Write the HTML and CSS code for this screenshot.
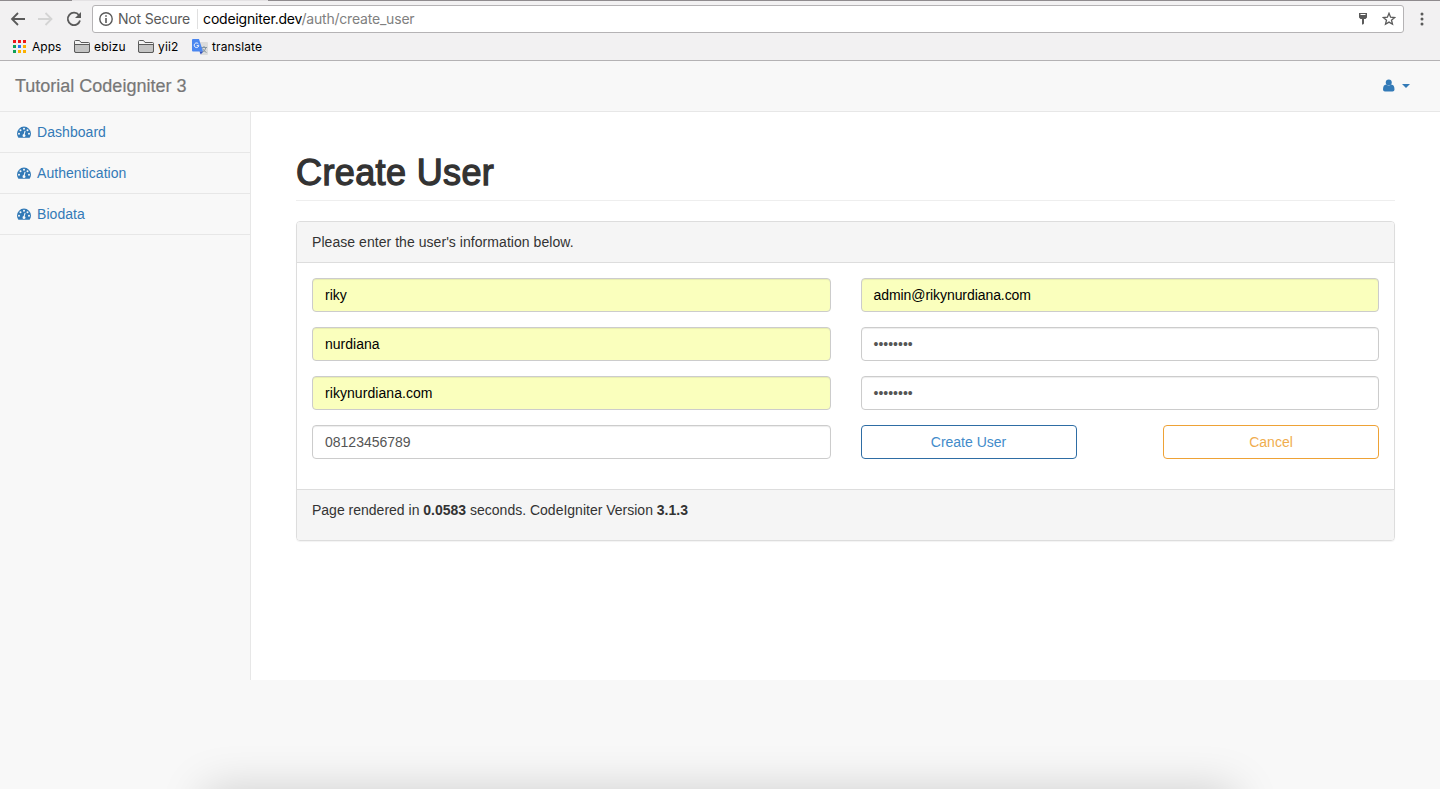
FILE: index.html
```html
<!DOCTYPE html>
<html lang="en">
<head>
<meta charset="utf-8">
<title>Create User</title>
<link rel="stylesheet" href="styles.css">
</head>
<body>
<svg width="0" height="0" class="defs">
  <symbol id="gauge" viewBox="0 0 14 12"><path fill="currentColor" fill-rule="evenodd" d="M7 .6a7 7 0 0 0-7 7c0 1.3.4 2.6 1.1 3.7.1.2.3.4.4.4h11c.2 0 .3-.2.4-.4.7-1.100 1.100-2.400 1.100-3.700a7 7 0 0 0-7-7zM2 8.700a1 1 0 1 1 0-2 1 1 0 0 1 0 2zM3.500 5.200a1 1 0 1 1 0-2 1 1 0 0 1 0 2zM7 1.700a1 1 0 1 1 0 2 1 1 0 0 1 0-2zM8.500 9.900A1.500 1.500 0 1 1 6.700 8.100L7.500 5.100a.5.5 0 0 1 1 .3L7.700 8.300c.6.400.9 1 .8 1.600zM10.500 5.200a1 1 0 1 1 0-2 1 1 0 0 1 0 2zM12 8.700a1 1 0 1 1 0-2 1 1 0 0 1 0 2z"/></symbol>
  <symbol id="folder" viewBox="0 0 16 13"><path fill="#f4f4f4" stroke="#5a5a5a" d="M.5 11V1.500q0-1 1-1h4l1.500 2h7.500q1 0 1 1V11q0 1.500-1.500 1.500H2Q.5 12.500.5 11z"/><path fill="#c4c4c4" stroke="#5a5a5a" d="M.5 4.500h15V11q0 1.500-1.500 1.500H2Q.5 12.500.5 11z"/></symbol>
</svg>
<header class="browser">
  <div class="tabline"><i></i><b></b><i></i></div>
  <div class="toolbar">
    <svg class="back" width="16" height="14" viewBox="0 0 16 14" fill="none" stroke="#5a5a5a" stroke-width="1.800"><path d="M15 7H2.500M8 1 2 7l6 6"/></svg>
    <svg class="forward" width="16" height="14" viewBox="0 0 16 14" fill="none" stroke="#d4d4d4" stroke-width="1.800"><path d="M0 7h13M7.500 1l6 6-6 6"/></svg>
    <svg class="reload" width="16" height="16" viewBox="0 0 16 16"><path d="M13 4.200A6.200 6.200 0 1 0 14 9.500" fill="none" stroke="#5a5a5a" stroke-width="1.800"/><path d="M15 1v6H9z" fill="#5a5a5a"/></svg>
    <div class="omnibox">
      <svg class="info" width="14" height="14" viewBox="0 0 14 14"><circle cx="7" cy="7" r="6.200" fill="none" stroke="#5a5a5a" stroke-width="1.400"/><path d="M6.200 6h1.600v5H6.200zM6.200 3.200h1.600v1.600H6.200z" fill="#5a5a5a"/></svg>
      <span class="secure">Not Secure</span>
      <span class="divider"></span>
      <span class="url">codeigniter.dev<em>/auth/create_user</em></span>
      <svg class="key" width="8" height="12" viewBox="0 0 8 12"><path fill="#5a5a5a" fill-rule="evenodd" d="M0 0h8v4.500L6.500 6H5v4.500L4 11.500H3V6H1.500L0 4.500zM1.500 1v1h5V1z"/></svg>
      <svg class="star" width="14" height="14" viewBox="0 0 14 14"><path d="M7 1.300 8.600 5.200l4.100.3-3.200 2.700 1 4L7 10.100l-3.500 2.100 1-4L1.300 5.500l4.100-.3z" fill="none" stroke="#5a5a5a" stroke-width="1.300"/></svg>
    </div>
    <svg class="dots" width="4" height="14" viewBox="0 0 4 14" fill="#5a5a5a"><circle cx="2" cy="2" r="1.500"/><circle cx="2" cy="7" r="1.500"/><circle cx="2" cy="12" r="1.500"/></svg>
  </div>
  <nav class="bookmarks">
    <svg class="apps" width="13" height="13" viewBox="0 0 13 13"><path fill="#f01818" d="M0 0h3v3H0zM5 0h3v3H5zM10 0h3v3h-3z"/><path fill="#0fa058" d="M0 5h3v3H0zM0 10h3v3H0z"/><path fill="#2878f0" d="M5 5h3v3H5z"/><path fill="#fbb000" d="M10 5h3v3h-3zM5 10h3v3H5zM10 10h3v3h-3z"/></svg>
    <span class="bm-apps">Apps</span>
    <svg class="folder" width="16" height="13"><use href="#folder"/></svg>
    <span class="bm-ebizu">ebizu</span>
    <svg class="folder" width="16" height="13"><use href="#folder"/></svg>
    <span class="bm-yii">yii2</span>
    <svg class="gtrans" width="16" height="16" viewBox="0 0 16 16"><path fill="#dcdcdc" d="M6 3h9q1 0 1 1v11q0 1-1 1H9z"/><path d="M9 8.500h6M12 7v1.500M14 8.500q-.8 3.500-4 5M10.500 9.500q1 2.500 4 4" stroke="#8595a0" fill="none"/><path fill="#4a86f0" d="M1 0h6l4 12.500H1q-1 0-1-1V1q0-1 1-1z"/><path fill="#3050c0" d="M7.500 12.500H11L8.800 15.500z"/><path d="M6.400 4.900A2.300 2.300 0 1 0 6.800 6.700H4.700" stroke="#fff" stroke-width="1" fill="none"/></svg>
    <span class="bm-trans">translate</span>
  </nav>
</header>
<div class="navbar">
  <a class="brand">Tutorial Codeigniter 3</a>
  <a class="user">
    <svg width="12" height="13" viewBox="0 0 12 13" fill="#337ab7"><path d="M3.200 5.500Q0 5.700 0 10.500 0 12.500 2 12.500h7.500q2 0 2-2 0-4.800-3.200-5Q5.750 7.800 3.200 5.500z"/><circle cx="5.750" cy="3.400" r="3"/></svg>
    <i class="caret"></i>
  </a>
</div>
<div class="wrapper">
  <aside class="sidebar">
    <a><svg width="14" height="12"><use href="#gauge"/></svg><span>Dashboard</span></a>
    <a><svg width="14" height="12"><use href="#gauge"/></svg><span>Authentication</span></a>
    <a><svg width="14" height="12"><use href="#gauge"/></svg><span>Biodata</span></a>
  </aside>
  <main class="page">
    <h1>Create User</h1>
    <section class="panel">
      <div class="panel-heading">Please enter the user's information below.</div>
      <div class="panel-body">
        <div class="column">
          <div class="field auto">riky</div>
          <div class="field auto">nurdiana</div>
          <div class="field auto site">rikynurdiana.com</div>
          <div class="field">08123456789</div>
        </div>
        <div class="column">
          <div class="field auto email">admin@rikynurdiana.com</div>
          <div class="field">••••••••</div>
          <div class="field">••••••••</div>
          <div class="actions">
            <a class="btn primary">Create User</a>
            <a class="btn warning">Cancel</a>
          </div>
        </div>
      </div>
      <div class="panel-footer">Page rendered in <strong>0.0583</strong> seconds. CodeIgniter Version <strong>3.1.3</strong></div>
    </section>
  </main>
</div>
<div class="shade"><div class="dock-shadow"></div></div>
</body>
</html>
```
FILE: styles.css
```css
* { box-sizing: border-box; }
html { overflow: hidden; }
body {
  position: relative;
  margin: 0;
  height: 789px;
  overflow: hidden;
  background: #f8f8f8;
  color: #333;
  font: 14px/20px "Liberation Sans", Arial, sans-serif;
}
svg { display: block; flex: none; }
.defs { position: absolute; }

/* Browser chrome */
.browser {
  height: 61px;
  background: #f2f1f2;
  border-bottom: 1px solid #b4b2b4;
  font-family: Inter, sans-serif;
  white-space: nowrap;
}
.tabline { display: flex; height: 1px; }
.tabline i { width: 72px; background: #8f8b8e; }
.tabline b { width: 196px; background: #e4e2e4; }
.tabline i:last-child { flex: 1; }
.toolbar { display: flex; align-items: center; height: 36px; padding: 0 16px 0 10px; }
.forward { margin-left: 12px; }
.reload { margin-left: 12px; }
.omnibox {
  display: flex;
  align-items: center;
  width: 1312px;
  height: 28px;
  margin-left: 10px;
  padding: 0 7px 0 6px;
  background: #fff;
  border: 1px solid #b5b3b5;
  border-radius: 3px;
}
.secure { margin-left: 5px; color: #5a5a5a; letter-spacing: -0.2px; }
.divider { width: 1px; height: 20px; margin: 0 5px 0 7px; background: #e0e0e0; }
.url { color: #000; letter-spacing: -0.2px; }
.url em { color: #808080; font-style: normal; }
.key { margin-left: auto; }
.star { margin-left: 15px; }
.dots { margin-left: 16px; }
.bookmarks {
  display: flex;
  align-items: center;
  height: 19px;
  padding-left: 13px;
  font-size: 12px;
  letter-spacing: 0.15px;
  color: #000;
}
.bookmarks span { margin-left: 4px; }
.bookmarks .bm-apps { width: 42px; margin-left: 6px; letter-spacing: 0; }
.bm-ebizu { width: 44px; }
.bm-yii { width: 34px; }
.bm-trans { letter-spacing: 0.12px; }

/* Application header */
.navbar {
  display: flex;
  align-items: center;
  justify-content: space-between;
  height: 51px;
  padding: 0 30px 0 15px;
  border-bottom: 1px solid #e7e7e7;
}
.brand { font-size: 18px; color: #777; -webkit-text-stroke: 0.2px #777; }
.user { display: flex; align-items: center; }
.user svg { margin-bottom: 1px; }
.caret {
  margin-left: 7px;
  border-top: 4px solid #337ab7;
  border-left: 4px solid transparent;
  border-right: 4px solid transparent;
}

.wrapper { display: flex; height: 568px; }
.sidebar { width: 250px; }
.sidebar a {
  display: flex;
  align-items: center;
  gap: 6px;
  height: 41px;
  padding-left: 17px;
  border-bottom: 1px solid #e7e7e7;
  color: #337ab7;
  letter-spacing: 0.05px;
}
.page { flex: 1; padding: 41px 45px 0; background: #fff; border-left: 1px solid #e7e7e7; }
h1 {
  height: 48px;
  margin: 0 0 20px;
  border-bottom: 1px solid #eee;
  font-size: 36px;
  line-height: 40px;
  font-weight: 400;
  letter-spacing: 0.38px;
  -webkit-text-stroke: 1.3px #333;
}
.panel {
  height: 320px;
  border: 1px solid #ddd;
  border-radius: 4px;
  box-shadow: 0 1px 1px rgba(0, 0, 0, .05);
  overflow: hidden;
}
.panel-heading {
  height: 41px;
  padding: 10px 15px;
  background: #f5f5f5;
  border-bottom: 1px solid #ddd;
  letter-spacing: 0.05px;
}
.panel-body { display: flex; gap: 30px; height: 226px; padding: 15px; }
.column { display: flex; flex: 1; flex-direction: column; gap: 15px; }
.field {
  height: 34px;
  padding: 6px 12px;
  border: 1px solid #ccc;
  border-radius: 4px;
  box-shadow: inset 0 1px 1px rgba(0, 0, 0, .075);
  color: #555;
}
.auto { background: #faffbd; color: #000; }
.site { letter-spacing: 0.06px; }
.email { letter-spacing: -0.07px; }
.actions { display: flex; justify-content: space-between; }
.btn { width: 216px; height: 34px; padding: 6px 0; border: 1px solid; border-radius: 4px; text-align: center; }
.primary { border-color: #2e6da4; color: #428bca; }
.warning { border-color: #eea236; color: #f0ad4e; }
.panel-footer { height: 52px; padding: 10px 15px; background: #f5f5f5; border-top: 1px solid #ddd; }

/* Soft shade cast at the bottom of the window */
.shade {
  position: absolute;
  left: 0;
  right: 0;
  bottom: 0;
  height: 60px;
  overflow: hidden;
  pointer-events: none;
}
.dock-shadow {
  width: 1030px;
  height: 60px;
  margin: 60px 0 0 205px;
  box-shadow: 0 0 45px rgba(0, 0, 0, .17);
}
```
